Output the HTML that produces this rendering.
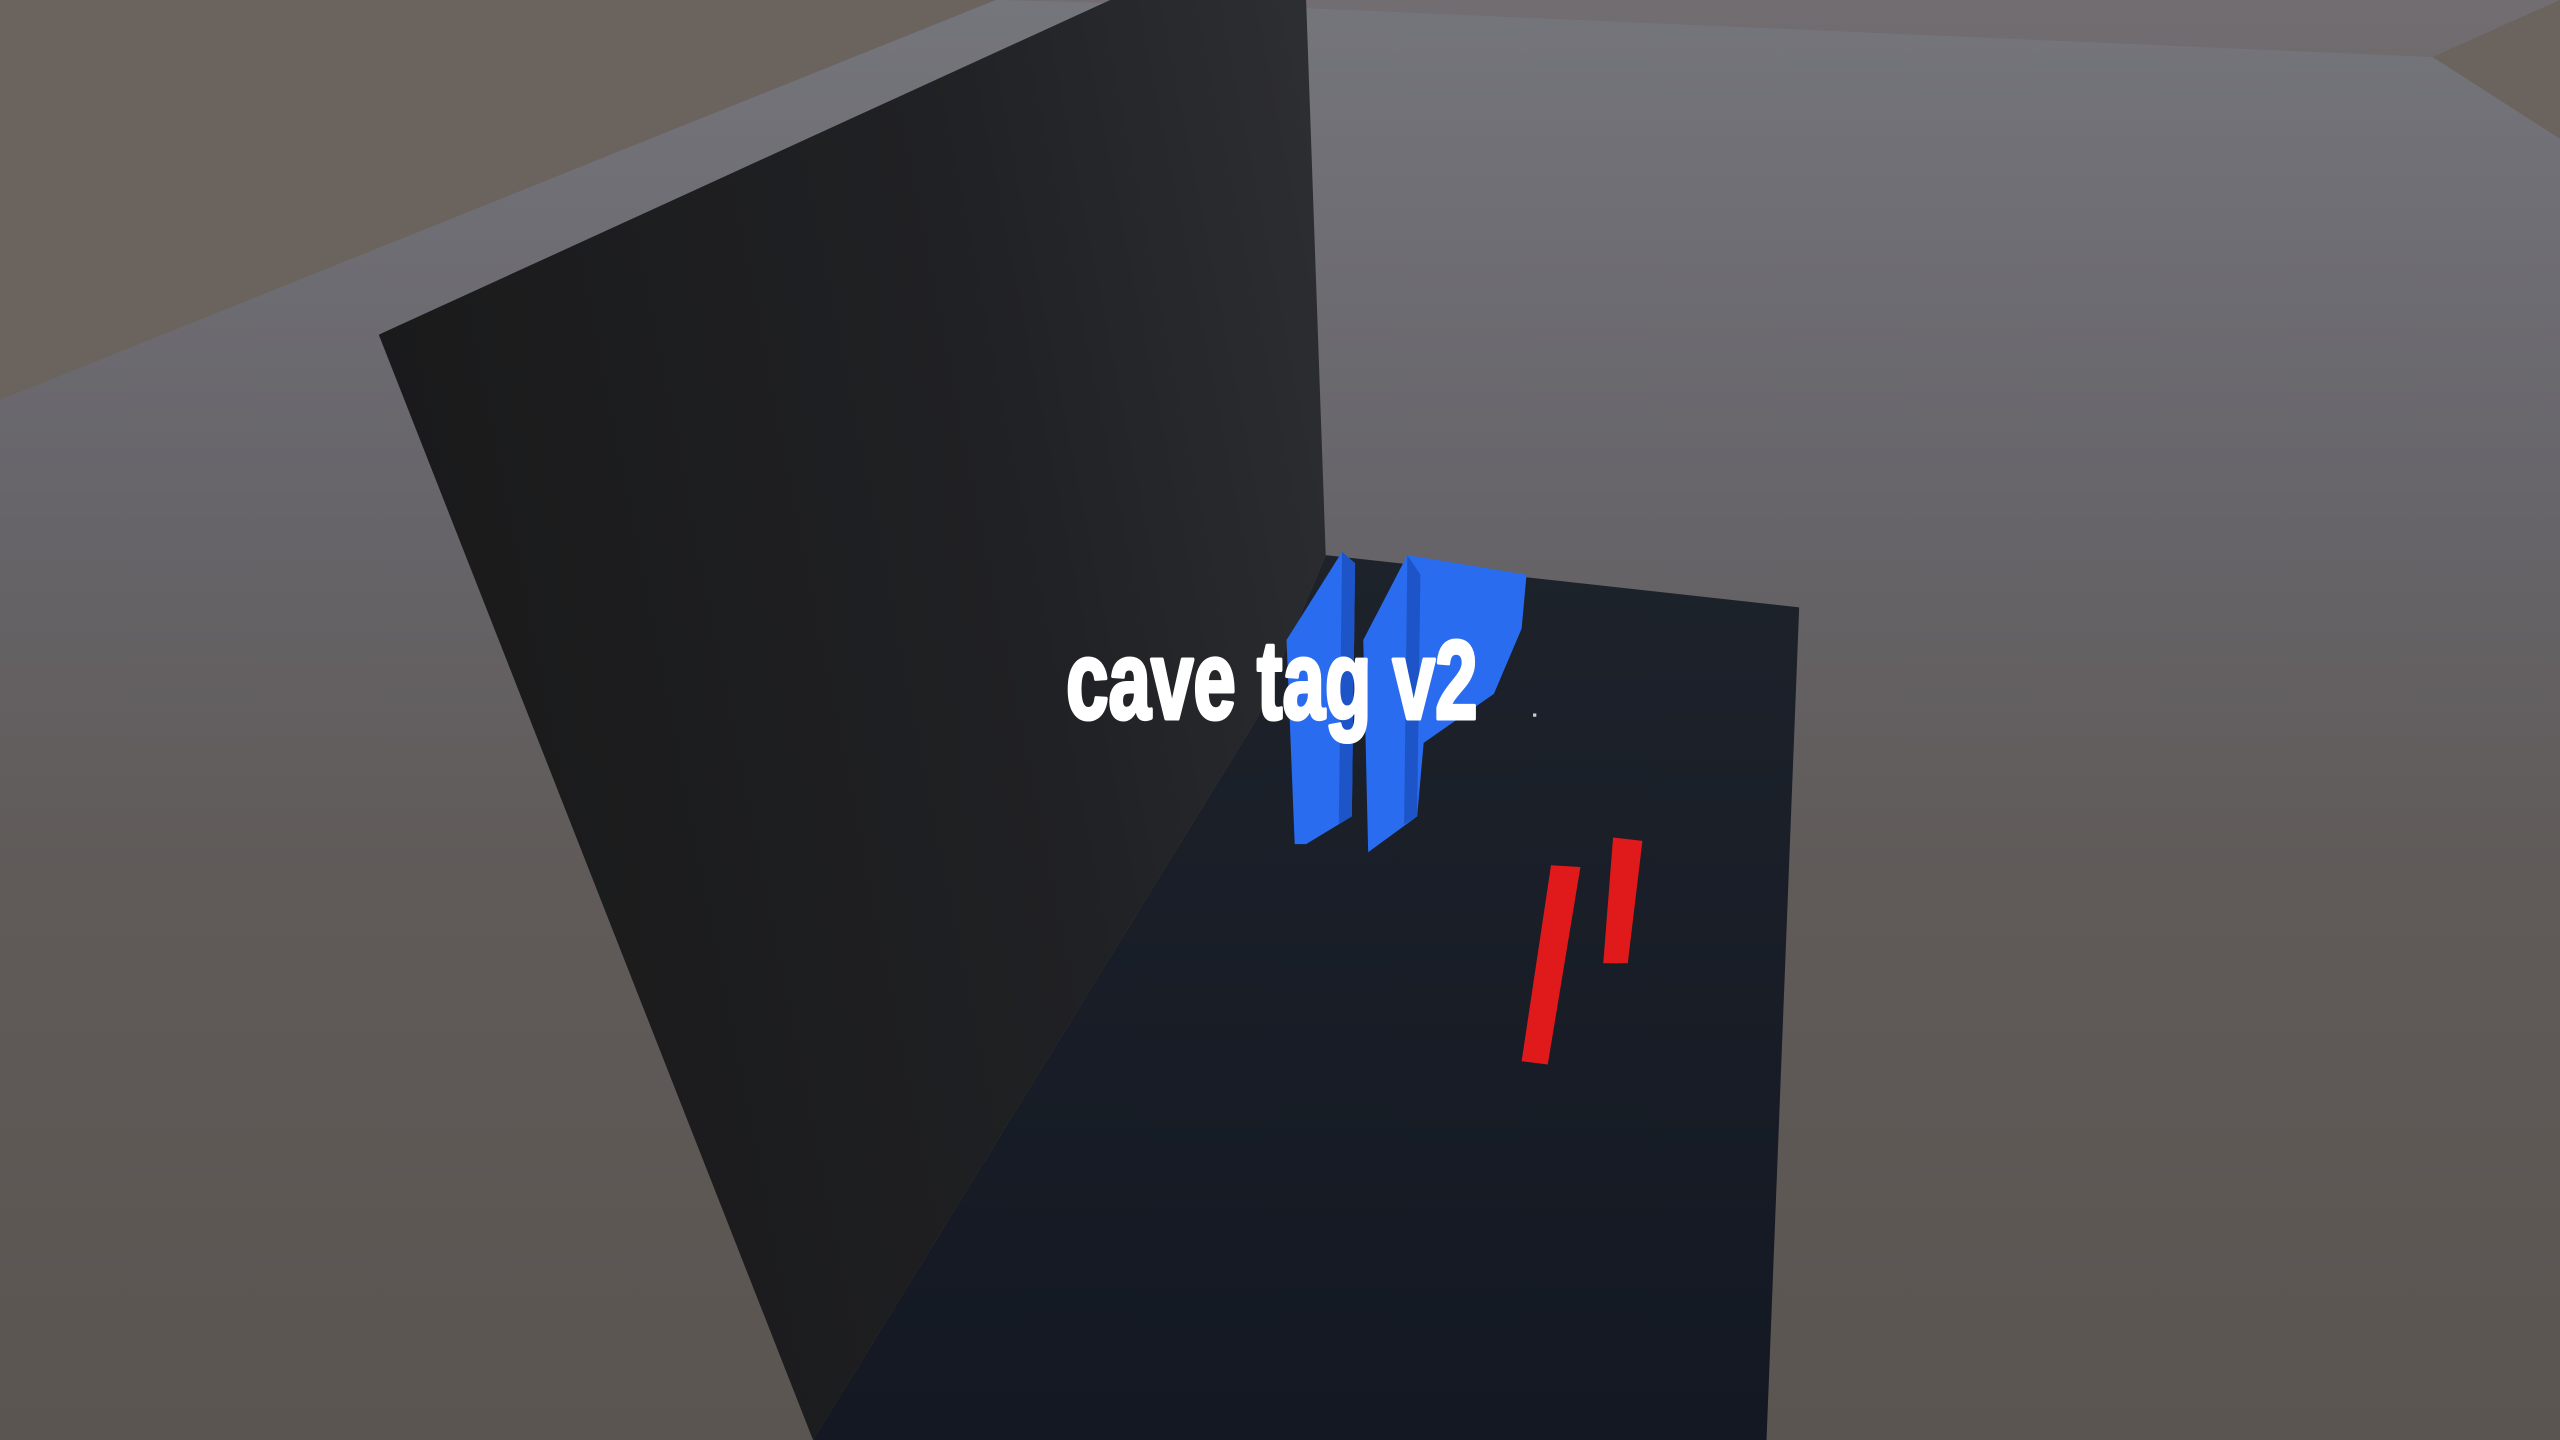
<!DOCTYPE html>
<html><head><meta charset="utf-8"><style>
html,body{margin:0;padding:0;width:2560px;height:1440px;overflow:hidden;background:#615b57}
svg{display:block}
</style></head><body>
<svg width="2560" height="1440" viewBox="0 0 1568 882" preserveAspectRatio="none" xmlns="http://www.w3.org/2000/svg">
<defs>
<linearGradient id="bg" x1="0" y1="0" x2="0" y2="1">
<stop offset="0" stop-color="#716d70"/><stop offset="0.4" stop-color="#67635f"/><stop offset="1" stop-color="#5b5551"/></linearGradient>
<linearGradient id="pl" x1="0" y1="0" x2="0" y2="1">
<stop offset="0" stop-color="#75757c"/><stop offset="0.35" stop-color="#67656a"/><stop offset="0.6" stop-color="#605b59"/><stop offset="1" stop-color="#5b5551"/></linearGradient>
<linearGradient id="wall" x1="0" y1="0.3" x2="1" y2="0">
<stop offset="0" stop-color="#1a1a1b"/><stop offset="0.6" stop-color="#202124"/><stop offset="1" stop-color="#2e2f33"/></linearGradient>
<linearGradient id="fl" x1="0" y1="0" x2="0" y2="1">
<stop offset="0" stop-color="#1d222b"/><stop offset="1" stop-color="#131822"/></linearGradient>
</defs>
<rect width="1568" height="882" fill="url(#bg)"/>
<polygon points="0,0 610,0 0,245" fill="#6b645e"/>
<polygon points="1490,35 1568,0 1568,85" fill="#6a635e"/>
<polygon points="0,245 610,0 800,5 1490,35 1568,85 1568,882 0,882" fill="url(#pl)"/>
<polygon points="812,340 1102,372 1082,882 498,882 770,440" fill="url(#fl)"/>
<polygon points="232,205 680,0 800,0 812,340 770,440 498,882" fill="url(#wall)"/>
<polygon points="788,392 822,338 830,345 828,500 800,517 793,517" fill="#2a6cf0"/>
<polygon points="822,338 830,345 828,500 820,505" fill="#1d55c8"/>
<polygon points="835,392 862,340 935,352 932,385 915,425 872,455 868,500 838,522" fill="#2a6cf0"/>
<polygon points="862,340 870,352 868,500 860,505" fill="#1d55c8"/>
<polygon points="950,530 968,531 948,652 932,650" fill="#e01a1a"/>
<polygon points="988,513 1006,515 997,590 982,590" fill="#e01a1a"/>
<text x="653" y="440" textLength="252" lengthAdjust="spacingAndGlyphs" font-family="'Liberation Sans Narrow','Liberation Sans',sans-serif" font-weight="bold" font-size="68" fill="#ffffff" stroke="#ffffff" stroke-width="2.5" stroke-linejoin="round">cave tag v2</text>
<rect x="939" y="437" width="2" height="2" fill="#ccc"/>
</svg>
</body></html>
